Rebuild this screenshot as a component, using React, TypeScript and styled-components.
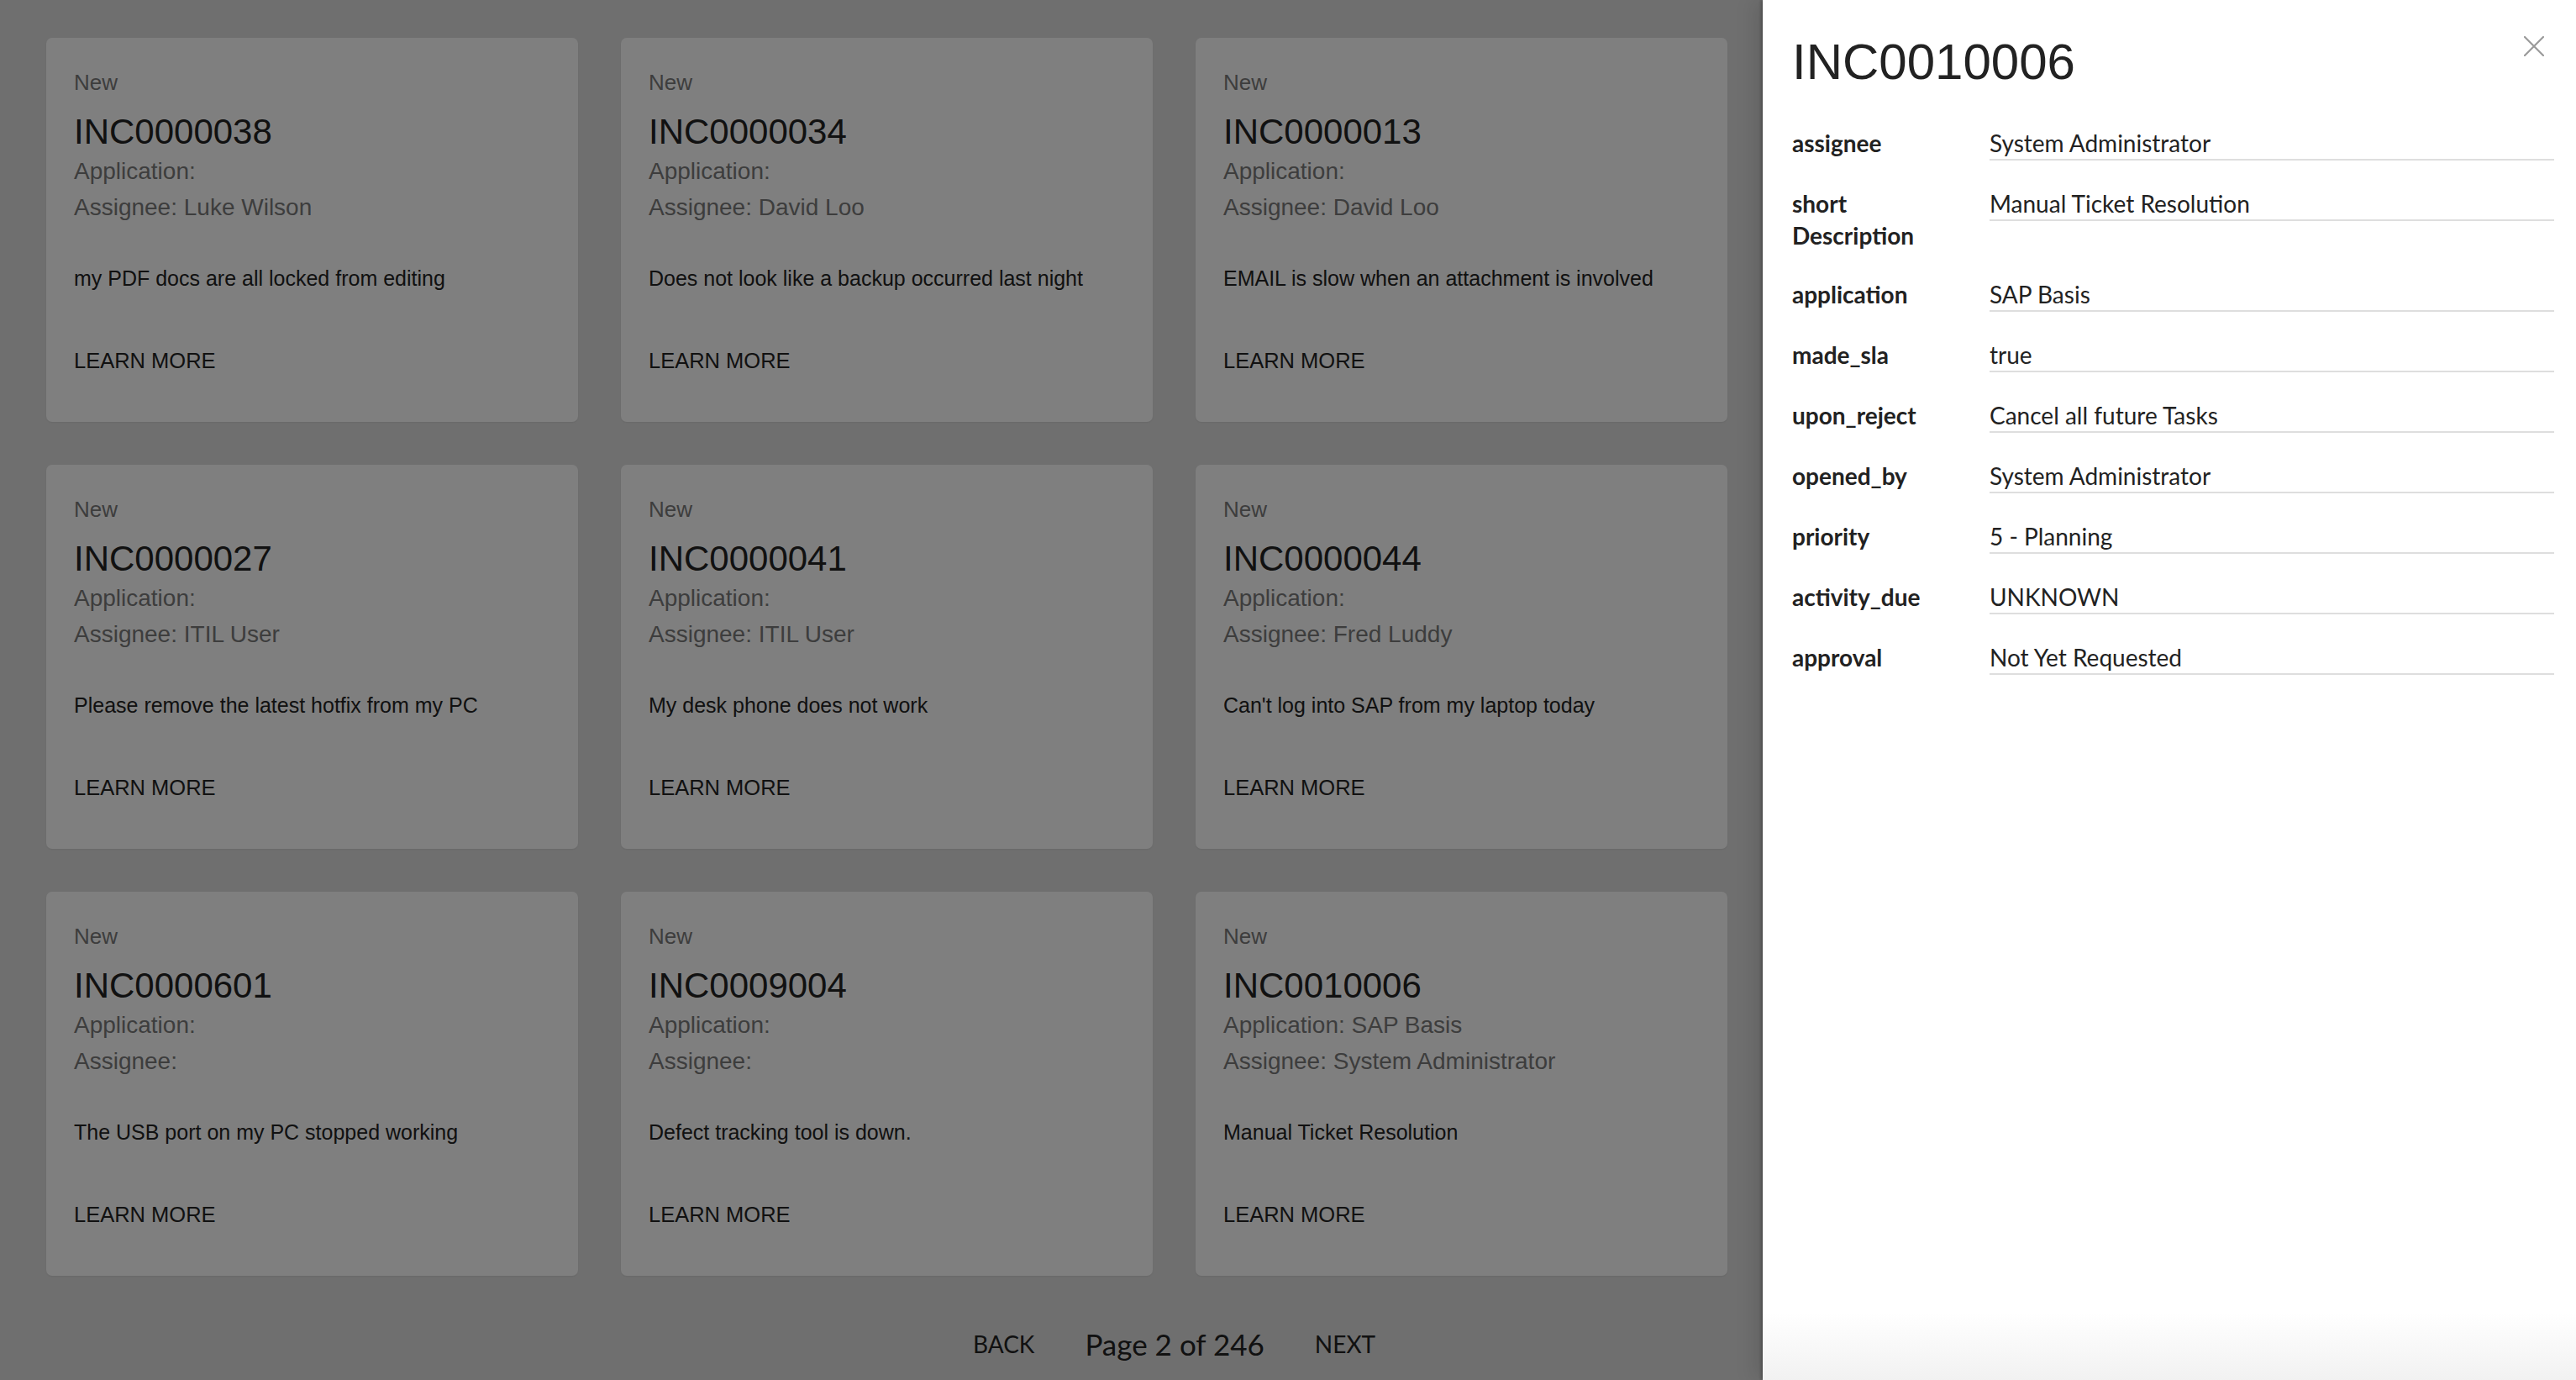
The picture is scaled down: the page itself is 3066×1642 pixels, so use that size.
import React from "react";
import styled, { createGlobalStyle } from "styled-components";

const Global = createGlobalStyle`
  html, body { margin: 0; padding: 0; }
  body {
    background: #dedede;
    overflow: hidden;
    font-family: "Liberation Sans", Arial, sans-serif;
  }
`;

type Incident = {
  state: string;
  number: string;
  application: string;
  assignee: string;
  description: string;
};

const incidents: Incident[] = [
  { state: "New", number: "INC0000038", application: "", assignee: "Luke Wilson", description: "my PDF docs are all locked from editing" },
  { state: "New", number: "INC0000034", application: "", assignee: "David Loo", description: "Does not look like a backup occurred last night" },
  { state: "New", number: "INC0000013", application: "", assignee: "David Loo", description: "EMAIL is slow when an attachment is involved" },
  { state: "New", number: "INC0000027", application: "", assignee: "ITIL User", description: "Please remove the latest hotfix from my PC" },
  { state: "New", number: "INC0000041", application: "", assignee: "ITIL User", description: "My desk phone does not work" },
  { state: "New", number: "INC0000044", application: "", assignee: "Fred Luddy", description: "Can't log into SAP from my laptop today" },
  { state: "New", number: "INC0000601", application: "", assignee: "", description: "The USB port on my PC stopped working" },
  { state: "New", number: "INC0009004", application: "", assignee: "", description: "Defect tracking tool is down." },
  { state: "New", number: "INC0010006", application: "SAP Basis", assignee: "System Administrator", description: "Manual Ticket Resolution" },
];

const details: [string, string][] = [
  ["assignee", "System Administrator"],
  ["short Description", "Manual Ticket Resolution"],
  ["application", "SAP Basis"],
  ["made_sla", "true"],
  ["upon_reject", "Cancel all future Tasks"],
  ["opened_by", "System Administrator"],
  ["priority", "5 - Planning"],
  ["activity_due", "UNKNOWN"],
  ["approval", "Not Yet Requested"],
];

const Page = styled.div`
  width: 3066px;
  height: 1642px;
  position: relative;
  overflow: hidden;
`;

const Content = styled.main`
  width: 2685px;
  padding: 45px 0 0 55px;
  display: flex;
  flex-direction: column;
`;

const Grid = styled.div`
  display: grid;
  grid-template-columns: repeat(3, 633px);
  grid-auto-rows: 457px;
  column-gap: 51px;
  row-gap: 51px;
`;

const Card = styled.article`
  background: #ffffff;
  border-radius: 7px;
  box-shadow: 0 1px 2px rgba(0, 0, 0, 0.06);
  padding: 35px 33px 0 33px;
  display: flex;
  flex-direction: column;
  box-sizing: border-box;
`;

const State = styled.div`
  font-size: 26px;
  line-height: 36px;
  color: #7a7a7a;
`;

const Number = styled.h2`
  margin: 16px 0 0 0;
  font-weight: 400;
  font-size: 42px;
  line-height: 50px;
  color: #222;
`;

const Meta = styled.div`
  font-size: 28px;
  line-height: 43px;
  color: #7a7a7a;
  &:first-of-type { margin-top: 4px; }
`;

const Description = styled.p`
  margin: 45px 0 0 0;
  font-size: 25px;
  line-height: 36px;
  color: #222;
`;

const LearnMore = styled.button`
  margin: 62px 0 0 0;
  padding: 0;
  align-self: flex-start;
  background: none;
  border: none;
  font-family: "Liberation Sans", Arial, sans-serif;
  font-size: 25.5px;
  line-height: 36px;
  text-transform: uppercase;
  color: #222;
  cursor: pointer;
`;

const Pagination = styled.nav`
  margin-top: 56px;
  display: flex;
  justify-content: center;
  align-items: center;
  gap: 60px;
  font-family: Lato, "Open Sans", sans-serif;
`;

const PageButton = styled.button`
  background: none;
  border: none;
  padding: 0;
  font-family: Lato, "Open Sans", sans-serif;
  font-size: 28px;
  line-height: 50px;
  text-transform: uppercase;
  color: #222;
`;

const PageLabel = styled.span`
  font-size: 35px;
  line-height: 50px;
  color: #222;
`;

const Overlay = styled.div`
  position: absolute;
  inset: 0;
  background: rgba(0, 0, 0, 0.5);
`;

const Drawer = styled.aside`
  position: absolute;
  top: 0;
  right: 0;
  bottom: 0;
  width: 968px;
  background: #ffffff;
  box-sizing: border-box;
  padding: 39px 26px 0 35px;
  box-shadow: -2px 0 3px rgba(0, 0, 0, 0.25), -8px 0 24px rgba(0, 0, 0, 0.12);
  display: flex;
  flex-direction: column;
  &::after {
    content: "";
    position: absolute;
    left: 0;
    right: 0;
    bottom: 0;
    height: 80px;
    background: linear-gradient(to bottom, rgba(238, 238, 238, 0), rgba(238, 238, 238, 0.8));
    pointer-events: none;
  }
`;

const Close = styled.button`
  position: absolute;
  top: 41px;
  right: 36px;
  width: 28px;
  height: 28px;
  padding: 0;
  background: none;
  border: none;
  display: flex;
  align-items: center;
  justify-content: center;
`;

const Title = styled.h1`
  margin: 0;
  font-weight: 400;
  font-size: 60px;
  line-height: 70px;
  color: #222;
  font-family: "Liberation Sans", Arial, sans-serif;
`;

const Fields = styled.dl`
  margin: 42px 0 0 0;
  display: grid;
  grid-template-columns: 180px 1fr;
  column-gap: 55px;
  row-gap: 32px;
  align-items: start;
`;

const Label = styled.dt`
  font-family: Lato, "Open Sans", sans-serif;
  font-weight: 700;
  font-size: 28px;
  line-height: 38px;
  color: #222;
`;

const Value = styled.dd`
  margin: 0;
  font-family: Lato, "Open Sans", sans-serif;
  font-size: 28px;
  line-height: 38px;
  color: #222;
  border-bottom: 2px solid #dedede;
`;

export default function App() {
  return (
    <Page>
      <Global />
      <Content>
        <Grid>
          {incidents.map((i) => (
            <Card key={i.number}>
              <State>{i.state}</State>
              <Number>{i.number}</Number>
              <Meta>Application: {i.application}</Meta>
              <Meta>Assignee: {i.assignee}</Meta>
              <Description>{i.description}</Description>
              <LearnMore>Learn More</LearnMore>
            </Card>
          ))}
        </Grid>
        <Pagination>
          <PageButton>Back</PageButton>
          <PageLabel>Page 2 of 246</PageLabel>
          <PageButton>Next</PageButton>
        </Pagination>
      </Content>
      <Overlay />
      <Drawer>
        <Close aria-label="close">
          <svg width="24" height="24" viewBox="0 0 24 24">
            <path d="M1 1 L23 23 M23 1 L1 23" stroke="#9a9a9a" strokeWidth="2.2" strokeLinecap="round" />
          </svg>
        </Close>
        <Title>INC0010006</Title>
        <Fields>
          {details.map(([k, v]) => (
            <React.Fragment key={k}>
              <Label>{k}</Label>
              <Value>{v}</Value>
            </React.Fragment>
          ))}
        </Fields>
      </Drawer>
    </Page>
  );
}
